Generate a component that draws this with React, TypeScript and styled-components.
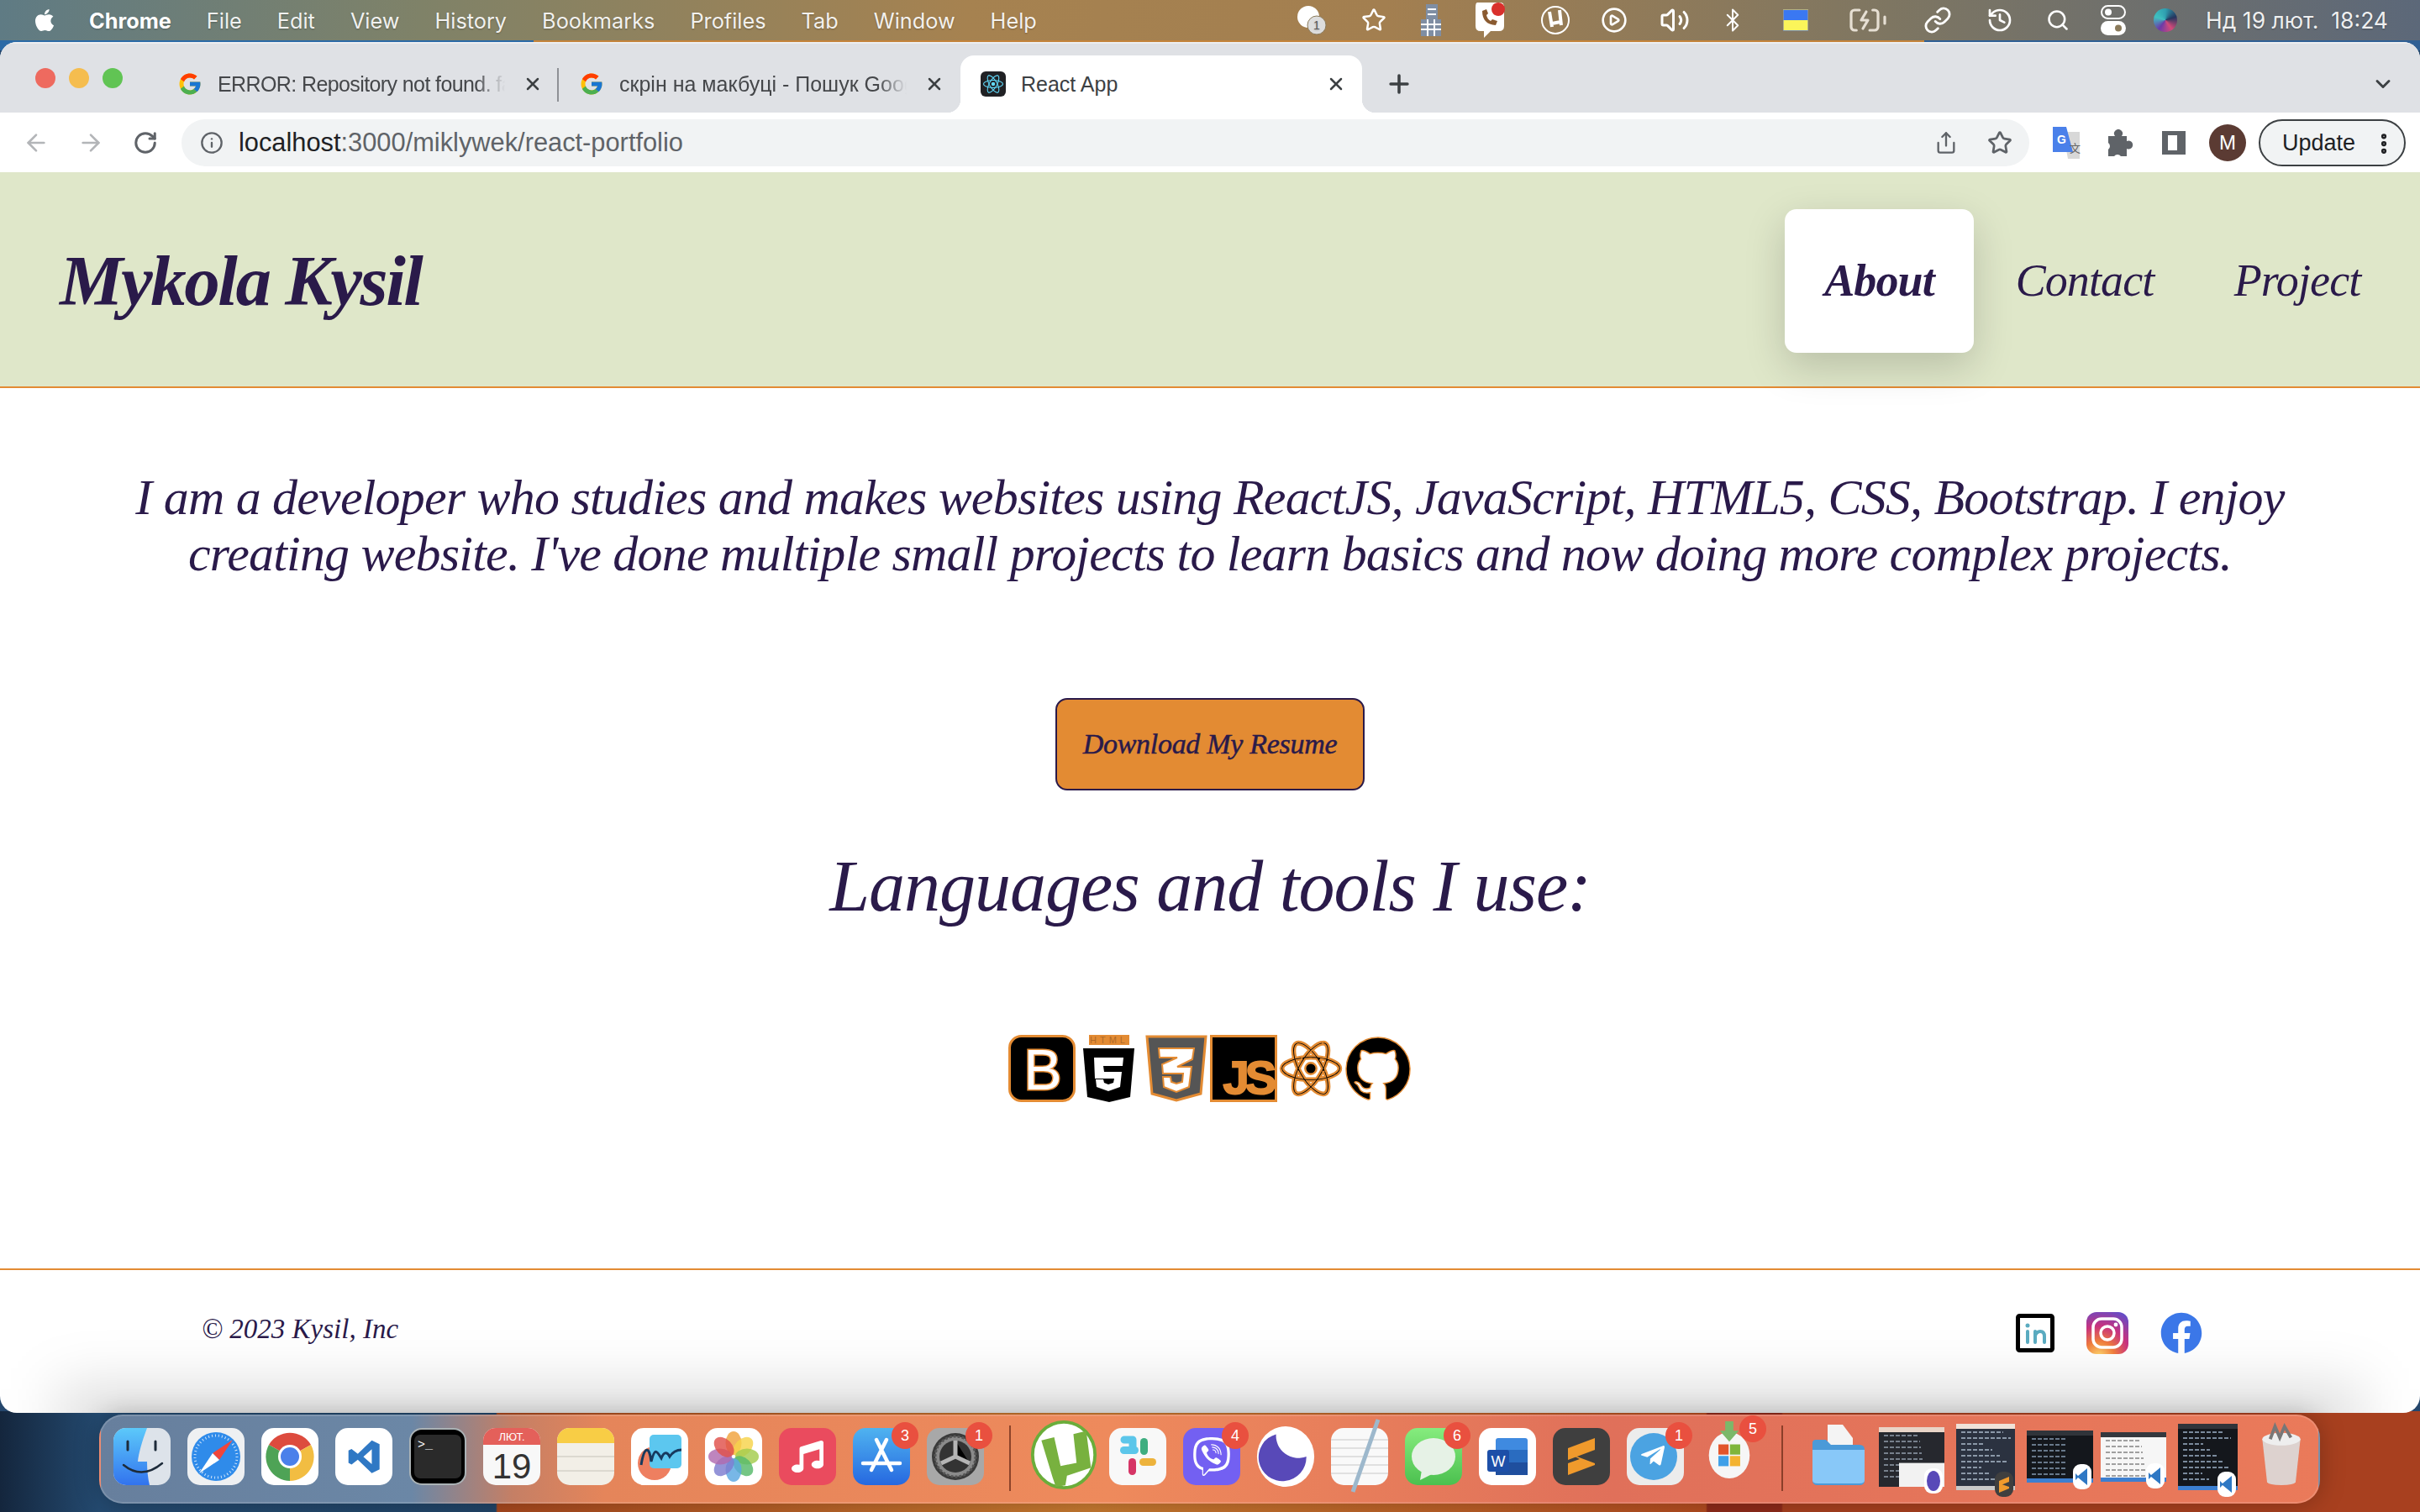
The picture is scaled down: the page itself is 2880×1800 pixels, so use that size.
import React from "react";
import styled, { createGlobalStyle } from "styled-components";
import { ArrowLeft, ArrowRight, RotateCw, Info, Share, Star, Plus, X, ChevronDown, Search, History, Link, Bluetooth, Volume2, CirclePlay, BatteryCharging, EllipsisVertical } from "lucide-react";
import { FaApple, FaFacebook, FaMusic, FaTelegramPlane, FaViber } from "react-icons/fa";
import { FcGoogle } from "react-icons/fc";
import { SiGithub, SiReact } from "react-icons/si";

const ink = "#2a1a4a";
const orange = "#e38b33";
const serif = '"Liberation Serif", "Times New Roman", serif';

const Global = createGlobalStyle`
  html, body { margin: 0; padding: 0; width: 2880px; height: 1800px; overflow: hidden; background: #24466c; }
  * { box-sizing: border-box; }
`;

const Desktop = styled.div`
  width: 2880px;
  height: 1800px;
  display: flex;
  flex-direction: column;
  background:
    linear-gradient(90deg, #2b6aa6 0 635px, #c4833a 635px 2290px, #2f5f94 2290px) top / 100% 60px no-repeat,
    linear-gradient(90deg, #14263d 0, #244a70 118px, #214467 590px, #a8481e 592px, #c77a30 1300px, #b34c20 2030px, #8e2a1a 2032px, #8e2a1a 2120px, #a8401f 2122px) bottom / 100% 120px no-repeat,
    #24466c;
  font-family: Inter, "Liberation Sans", sans-serif;
`;

const MenuBar = styled.header`
  height: 48px;
  flex: none;
  display: flex;
  align-items: center;
  padding: 0 38px 0 38px;
  color: #fff;
  background: linear-gradient(90deg, #5f7b84 0, #7f8268 500px, #a68250 1150px, #a37f50 1650px, #7e7662 2250px, #5c6879 2880px);
  text-shadow: 0 1px 2px rgba(0, 0, 0, .25);
`;

const LeftMenu = styled.nav`
  display: flex;
  align-items: center;
  gap: 42px;
`;

const AppleMark = styled.span`
  display: flex;
  margin-right: -4px;
  font-size: 30px;
`;

const MenuItem = styled.span<{ $strong?: boolean }>`
  font-weight: ${p => (p.$strong ? 700 : 400)};
  font-size: 25.3px;
  white-space: nowrap;
  color: rgba(255, 255, 255, ${p => (p.$strong ? 1 : .92)});
`;

const StatusArea = styled.div`
  margin-left: auto;
  display: flex;
  align-items: center;
`;

const StatusSlot = styled.span<{ $w: number }>`
  width: ${p => p.$w}px;
  display: flex;
  justify-content: center;
  align-items: center;
  color: #fff;
  svg { display: block; }
`;

const Clock = styled.span`
  margin-left: 15px;
  font-size: 26.5px;
  white-space: pre;
  color: rgba(255, 255, 255, .92);
`;

const Flag = styled.span`
  width: 30px;
  height: 26px;
  border: 1px solid rgba(150, 150, 150, .7);
  background: linear-gradient(#3a78f2 50%, #fbf55a 50%);
`;

const Siri = styled.span`
  width: 28px;
  height: 28px;
  border-radius: 50%;
  background: conic-gradient(#2f9fb0, #24365f, #d34a7a, #6b3aa8, #3fc0c0, #2f9fb0);
`;

const BrowserWindow = styled.div`
  margin-top: 2px;
  height: 1632px;
  flex: none;
  display: flex;
  flex-direction: column;
  overflow: hidden;
  background: #fff;
  border-radius: 20px;
`;

const TabStrip = styled.div`
  height: 84px;
  flex: none;
  display: flex;
  align-items: flex-end;
  background: #dfe1e5;
  position: relative;
  border-top: 2px solid #eceef0;
`;

const Lights = styled.div`
  width: 187px;
  height: 68px;
  padding: 15px 0 0 42px;
  display: flex;
  gap: 16px;
  align-self: flex-end;
  flex: none;
`;

const Light = styled.span<{ $c: string }>`
  width: 24px;
  height: 24px;
  border-radius: 50%;
  background: ${p => p.$c};
`;

const Tab = styled.div<{ $active?: boolean }>`
  width: 478px;
  height: 68px;
  flex: none;
  display: flex;
  align-items: center;
  gap: 18px;
  padding: 0 16px 0 24px;
  position: relative;
  color: ${p => (p.$active ? "#3c4043" : "#45474a")};
  background: ${p => (p.$active ? "#fff" : "transparent")};
  border-radius: ${p => (p.$active ? "16px 16px 0 0" : "0")};
  font: 25px "Liberation Sans", Arial, sans-serif;
  &::before, &::after {
    content: ${p => (p.$active ? '""' : "none")};
    position: absolute;
    bottom: 0;
    width: 16px;
    height: 16px;
  }
  &::before { left: -16px; background: radial-gradient(circle at 0 0, transparent 16px, #fff 16.5px); }
  &::after { right: -16px; background: radial-gradient(circle at 100% 0, transparent 16px, #fff 16.5px); }
`;

const TabDivider = styled.span`
  width: 2px;
  height: 40px;
  background: #8f9196;
  position: absolute;
  right: 0;
  top: 15px;
`;

const Favicon = styled.span`
  width: 30px;
  height: 30px;
  flex: none;
  display: flex;
  align-items: center;
  justify-content: center;
`;

const ReactFavicon = styled(Favicon)`
  background: #202124;
  border-radius: 6px;
  color: #61dafb;
`;

const TabTitle = styled.span<{ $fade?: number }>`
  flex: 1;
  min-width: 0;
  overflow: hidden;
  white-space: nowrap;
  ${p => p.$fade !== undefined && `letter-spacing: ${p.$fade}px; mask-image: linear-gradient(90deg, #000 90%, transparent 100%);`}
`;

const TabClose = styled.span`
  width: 30px;
  display: flex;
  justify-content: center;
  color: #3c4043;
`;

const NewTab = styled.span`
  margin-left: 27px;
  height: 68px;
  display: flex;
  align-items: center;
  color: #3c4043;
`;

const TabMenu = styled.span`
  margin-left: auto;
  margin-right: 30px;
  height: 68px;
  display: flex;
  align-items: center;
  color: #3c4043;
`;

const Toolbar = styled.div`
  height: 71px;
  flex: none;
  display: flex;
  align-items: center;
  padding: 0 0 0 10px;
  background: #fff;
`;

const NavButton = styled.span<{ $dim?: boolean }>`
  width: 65px;
  display: flex;
  justify-content: center;
  color: ${p => (p.$dim ? "#b3b5b8" : "#5f6368")};
`;

const Omnibox = styled.div`
  width: 2199px;
  height: 56px;
  margin-left: 11px;
  display: flex;
  align-items: center;
  padding: 0 3px 0 22px;
  background: #f1f3f4;
  border-radius: 28px;
  font: 30.8px "Liberation Sans", Arial, sans-serif;
  color: #5f6368;
`;

const Url = styled.span`
  margin-left: 18px;
  flex: 1;
  b { font-weight: 400; color: #202124; }
`;

const OmniAction = styled.span`
  width: 64px;
  display: flex;
  justify-content: center;
  color: #5f6368;
`;

const Extensions = styled.div`
  margin-left: 12px;
  display: flex;
  align-items: center;
`;

const Extension = styled.span`
  width: 64px;
  display: flex;
  justify-content: center;
  align-items: center;
  color: #5f6368;
`;

const PanelGlyph = styled.span`
  width: 28px;
  height: 28px;
  border: 5px solid #5f6368;
  border-left-width: 7px;
  border-right-width: 10px;
`;

const Avatar = styled.span`
  width: 44px;
  height: 44px;
  border-radius: 50%;
  background: #5b3b33;
  color: #fff;
  font: 24px "Liberation Sans", Arial, sans-serif;
  display: flex;
  align-items: center;
  justify-content: center;
`;

const UpdatePill = styled.span`
  margin-left: 5px;
  width: 175px;
  height: 56px;
  display: flex;
  align-items: center;
  justify-content: space-between;
  padding: 2px 9px 0 26px;
  border: 2px solid #3c4043;
  border-radius: 28px;
  background: #f1f3f4;
  color: #202124;
  font: 27px "Liberation Sans", Arial, sans-serif;
`;

const SiteHeader = styled.header`
  height: 257px;
  flex: none;
  display: flex;
  align-items: center;
  padding: 3px 0 0 71px;
  background: #dfe7c9;
  border-bottom: 2px solid ${orange};
  color: ${ink};
  font-family: ${serif};
  font-style: italic;
`;

const Brand = styled.h1`
  margin: 0;
  font-size: 85px;
  font-weight: 700;
  letter-spacing: -2.5px;
  white-space: nowrap;
`;

const SiteNav = styled.nav`
  margin-left: auto;
  margin-right: 25px;
  display: flex;
  align-items: center;
`;

const SiteLink = styled.a<{ $active?: boolean; $w: number }>`
  width: ${p => p.$w}px;
  height: 171px;
  display: flex;
  align-items: center;
  justify-content: center;
  font-size: 54px;
  letter-spacing: -.9px;
  font-weight: ${p => (p.$active ? 700 : 400)};
  background: ${p => (p.$active ? "#fff" : "transparent")};
  border-radius: 14px;
  box-shadow: ${p => (p.$active ? "0 16px 48px rgba(0, 0, 0, .175)" : "none")};
`;

const Main = styled.main`
  flex: 1;
  display: flex;
  flex-direction: column;
  align-items: center;
  padding-top: 97px;
  color: ${ink};
  font-family: ${serif};
  font-style: italic;
`;

const Tagline = styled.p`
  margin: 0;
  font-size: 60px;
  letter-spacing: -.8px;
  line-height: 67px;
  text-align: center;
  white-space: nowrap;
`;

const ResumeButton = styled.button`
  margin-top: 138px;
  width: 368px;
  height: 110px;
  background: ${orange};
  border: 2px solid ${ink};
  border-radius: 14px;
  color: ${ink};
  font: italic 400 34px ${serif};
  letter-spacing: -.3px;
  -webkit-text-stroke: .5px ${ink};
  padding: 0;
`;

const ToolsHeading = styled.h2`
  margin: 64px 0 0;
  font-size: 86px;
  letter-spacing: -1px;
  font-weight: 400;
  line-height: 100px;
`;

const TechRow = styled.div`
  margin-top: 127px;
  display: flex;
  font-style: normal;
`;

const TechIcon = styled.span<{ $stroke?: number }>`
  width: 80px;
  height: 80px;
  display: flex;
  align-items: center;
  justify-content: center;
  svg {
    display: block;
    overflow: visible;
    color: #000;
    ${p => p.$stroke && `stroke: ${orange}; stroke-width: ${p.$stroke}px;`}
  }
`;

const Footer = styled.footer`
  height: 172px;
  flex: none;
  display: flex;
  justify-content: space-between;
  align-items: flex-start;
  padding: 50px 259px 0 240px;
  border-top: 2px solid ${orange};
  color: ${ink};
  position: relative;
  &::after {
    content: "";
    position: absolute;
    left: 70px;
    right: 70px;
    bottom: -40px;
    height: 70px;
    background: rgba(0, 0, 0, .15);
    filter: blur(34px);
  }
`;

const Copyright = styled.span`
  font: italic 400 33px/40px ${serif};
`;

const Socials = styled.div`
  display: flex;
  align-items: center;
  gap: 38px;
  position: relative;
  z-index: 1;
`;

const Dock = styled.nav`
  margin: 2px 0 0 118px;
  width: 2643px;
  height: 106px;
  flex: none;
  display: flex;
  align-items: flex-start;
  gap: 20px;
  padding: 14px 0 0 15px;
  border-radius: 28px;
  border: 2px solid rgba(255, 255, 255, .14);
  background: linear-gradient(90deg, #677f9d 0, #6b87a6 370px, #c57f65 490px, #e5855a 600px, #ee8a5c 1200px, #e0705a 1800px, #ea7a5a 2640px);
  box-shadow: 0 0 30px rgba(0, 0, 0, .25);
`;

const DockSlot = styled.span<{ $size?: number; $top?: number }>`
  width: ${p => p.$size ?? 68}px;
  height: ${p => p.$size ?? 68}px;
  flex: none;
  position: relative;
  margin: ${p => p.$top ?? 0}px ${p => (68 - (p.$size ?? 68)) / 2}px 0;
  & > svg { display: block; width: 100%; height: 100%; overflow: visible; }
`;

const ThumbSlot = styled.span`
  width: 68px;
  height: 68px;
  flex: none;
  display: flex;
  align-items: center;
  justify-content: center;
  svg { flex: none; display: block; overflow: visible; }
`;

const Badge = styled.span`
  position: absolute;
  top: -7px;
  right: -10px;
  width: 32px;
  height: 32px;
  border-radius: 50%;
  background: #e9503f;
  color: #fff;
  font: 18px "Liberation Sans", Arial, sans-serif;
  display: flex;
  align-items: center;
  justify-content: center;
`;

const DockDivider = styled.span<{ $l: number; $r: number }>`
  width: 2px;
  height: 78px;
  margin: -3px ${p => p.$r}px 0 ${p => p.$l}px;
  flex: none;
  background: rgba(110, 45, 25, .75);
`;

const R = ({ fill, r = 15 }: { fill: string; r?: number }) => <rect width="68" height="68" rx={r} fill={fill} />;

const Finder = () => (
  <svg viewBox="0 0 68 68">
    <defs><linearGradient id="fb" x1="0" y1="0" x2="0" y2="1"><stop offset="0" stopColor="#5cc9fa" /><stop offset="1" stopColor="#3273ee" /></linearGradient></defs>
    <R fill="#dde3ea" />
    <path d="M15 0H40C34 16 30 30 29 40H40C40 50 41 60 43 68H15A15 15 0 0 1 0 53V15A15 15 0 0 1 15 0Z" fill="url(#fb)" />
    <path d="M17 16V26M50 16V26" stroke="#1d2b3a" strokeWidth="3" strokeLinecap="round" />
    <path d="M12 44Q34 62 58 42" stroke="#1d2b3a" strokeWidth="2.5" fill="none" strokeLinecap="round" />
  </svg>
);
const Safari = () => (
  <svg viewBox="0 0 68 68">
    <R fill="#eef0f2" />
    <circle cx="34" cy="34" r="29" fill="#2f8bea" />
    <circle cx="34" cy="34" r="25" fill="none" stroke="#cfe4fa" strokeWidth="3" strokeDasharray="1 3" />
    <path d="M54 14L38 38L30 30Z" fill="#f0453a" />
    <path d="M14 54L30 30L38 38Z" fill="#fff" />
  </svg>
);
const Chrome = () => (
  <svg viewBox="0 0 68 68">
    <R fill="#fff" />
    <path d="M34 34L9 20A29 29 0 0 1 59 20Z" fill="#dd4b3e" />
    <path d="M34 34L59 20A29 29 0 0 1 34 63Z" fill="#f2bd42" />
    <path d="M34 34L34 63A29 29 0 0 1 9 20Z" fill="#4ea356" />
    <circle cx="34" cy="34" r="14" fill="#fff" />
    <circle cx="34" cy="34" r="11" fill="#4a80ea" />
  </svg>
);
const VsCode = () => (
  <svg viewBox="0 0 68 68">
    <R fill="#fff" />
    <g transform="translate(12 12) scale(1.85)">
      <path d="M17 1.5l5 2.4v16.2l-5 2.4-9-8.6-4 3.1-2-1V8l2-1 4 3.1zM17 7.2L11.6 12l5.4 4.8z" fill="#2f78c4" />
    </g>
  </svg>
);
const Terminal = () => (
  <svg viewBox="0 0 68 68">
    <R fill="#aab2b5" />
    <rect x="2" y="2" width="64" height="64" rx="13" fill="#000" />
    <rect x="6" y="8" width="56" height="52" rx="7" fill="#2a2a2a" />
    <text x="10" y="24" fill="#fff" fontFamily="Liberation Mono" fontSize="15">{">_"}</text>
  </svg>
);
const Calendar = () => (
  <svg viewBox="0 0 68 68">
    <R fill="#f8f8f8" />
    <path d="M15 0H53A15 15 0 0 1 68 15V20H0V15A15 15 0 0 1 15 0Z" fill="#e4605a" />
    <text x="34" y="15" textAnchor="middle" fill="#fff" fontFamily="Liberation Sans" fontSize="13">ЛЮТ.</text>
    <text x="34" y="60" textAnchor="middle" fill="#333" fontFamily="Liberation Sans" fontSize="42">19</text>
  </svg>
);
const Notes = () => (
  <svg viewBox="0 0 68 68">
    <R fill="#f2efe7" />
    <path d="M15 0H53A15 15 0 0 1 68 15V18H0V15A15 15 0 0 1 15 0Z" fill="#f8cd45" />
    <path d="M0 34H68M0 51H68" stroke="#dcd9d0" strokeWidth="2" />
  </svg>
);
const Freeform = () => (
  <svg viewBox="0 0 68 68">
    <R fill="#fff" />
    <circle cx="28" cy="42" r="20" fill="#ee7f60" />
    <rect x="22" y="8" width="38" height="40" rx="5" fill="#5cc7ef" />
    <path d="M12 44C16 20 22 22 24 40C28 24 30 26 36 36C40 26 44 30 46 34C50 28 54 26 60 26" fill="none" stroke="#173a5e" strokeWidth="3" />
  </svg>
);
const Photos = () => (
  <svg viewBox="0 0 68 68">
    <R fill="#fff" />
    {["#f0a23c", "#f6d34a", "#a3cc4d", "#57b96a", "#5aa7e2", "#7c7cd0", "#b06ab0", "#e0504a"].map((c, i) => (
      <ellipse key={c} cx="34" cy="18" rx="9.5" ry="14" fill={c} opacity=".82" transform={`rotate(${i * 45} 34 34)`} />
    ))}
  </svg>
);
const Music = () => (
  <svg viewBox="0 0 68 68">
    <R fill="#ea4b5e" />
    <g transform="translate(15 15)"><FaMusic size={38} color="#fff" /></g>
  </svg>
);
const AppStore = () => (
  <svg viewBox="0 0 68 68">
    <defs><linearGradient id="as" x1="0" y1="0" x2="0" y2="1"><stop offset="0" stopColor="#4fb3f0" /><stop offset="1" stopColor="#2668e0" /></linearGradient></defs>
    <R fill="url(#as)" />
    <path d="M28 14L46 50M40 14L22 50M12 42H56" stroke="#fff" strokeWidth="4.5" strokeLinecap="round" />
  </svg>
);
const Settings = () => (
  <svg viewBox="0 0 68 68">
    <R fill="#a8a8a8" />
    <circle cx="34" cy="34" r="28" fill="#3a3a3a" />
    <circle cx="34" cy="34" r="24" fill="#8a8a8a" stroke="#555" strokeWidth="3" strokeDasharray="3 2" />
    <circle cx="34" cy="34" r="19" fill="#333" />
    <path d="M34 15V34L51 42M34 34L17 42" stroke="#b5b5b5" strokeWidth="5" />
  </svg>
);
const UTorrent = () => (
  <svg viewBox="0 0 80 84">
    <ellipse cx="40" cy="42" rx="39" ry="41" fill="#fff" stroke="#6aad3a" strokeWidth="4" />
    <path d="M12 24L28 20L36 56L56 52L52 16L68 12L74 58L44 68L42 80L30 82L26 70Z" fill="#78b13f" />
  </svg>
);
const Slack = () => (
  <svg viewBox="0 0 68 68">
    <R fill="#f8f8f8" />
    <path d="M28 14H18M28 14V22" stroke="#5cc6ea" strokeWidth="9" strokeLinecap="round" />
    <rect x="13" y="22" width="22" height="9" rx="4.5" fill="#5cc6ea" />
    <rect x="37" y="12" width="9" height="20" rx="4.5" fill="#3fae80" />
    <rect x="36" y="36" width="20" height="9" rx="4.5" fill="#edb33c" />
    <rect x="23" y="36" width="9" height="20" rx="4.5" fill="#d63566" />
  </svg>
);
const Viber = () => (
  <svg viewBox="0 0 68 68">
    <R fill="#7360f2" />
    <g transform="translate(11 11)"><FaViber size={46} color="#fff" /></g>
  </svg>
);
const Moon = () => (
  <svg viewBox="0 0 72 76">
    <ellipse cx="36" cy="38" rx="36" ry="38" fill="#fff" />
    <path d="M24 10A30 30 0 1 0 62 38 28 28 0 0 1 24 10Z" fill="#5849b8" />
  </svg>
);
const TextEdit = () => (
  <svg viewBox="0 0 68 68">
    <R fill="#f9f9f9" />
    <path d="M0 14H68M0 24H68M0 34H68M0 44H68M0 54H68" stroke="#d8d8d8" strokeWidth="1.5" />
    <path d="M56 -10L26 76" stroke="#9db8cc" strokeWidth="5" />
  </svg>
);
const Messages = () => (
  <svg viewBox="0 0 68 68">
    <defs><linearGradient id="ms" x1="0" y1="0" x2="0" y2="1"><stop offset="0" stopColor="#86ec7e" /><stop offset="1" stopColor="#4bc04f" /></linearGradient></defs>
    <R fill="url(#ms)" />
    <ellipse cx="34" cy="34" rx="26" ry="22" fill="#e6f2e6" />
    <path d="M20 50L18 62L34 54Z" fill="#e6f2e6" />
  </svg>
);
const Word = () => (
  <svg viewBox="0 0 68 68">
    <R fill="#fff" />
    <rect x="20" y="12" width="38" height="44" rx="3" fill="#3f8ae0" />
    <rect x="20" y="26" width="38" height="15" fill="#2a6cc0" />
    <rect x="20" y="41" width="38" height="15" fill="#1f4f9e" />
    <rect x="10" y="26" width="26" height="26" rx="3" fill="#1d4fa8" />
    <text x="23" y="46" textAnchor="middle" fill="#fff" fontFamily="Liberation Sans" fontSize="18">W</text>
  </svg>
);
const Sublime = () => (
  <svg viewBox="0 0 68 68">
    <R fill="#3f3f3f" />
    <path d="M50 12V26L18 38V24ZM18 30L50 42V44L18 56V42L32 37Z" fill="#f09a2c" />
  </svg>
);
const Telegram = () => (
  <svg viewBox="0 0 68 68">
    <R fill="#ececec" />
    <circle cx="32" cy="34" r="28" fill="#4ba3e2" />
    <g transform="translate(15 17)"><FaTelegramPlane size={32} color="#fff" /></g>
  </svg>
);
const MsStore = () => (
  <svg viewBox="0 0 68 84">
    <ellipse cx="34" cy="50" rx="30" ry="34" fill="#f6f6f6" />
    <rect x="18" y="34" width="15" height="15" fill="#e2552b" />
    <rect x="35" y="34" width="15" height="15" fill="#7fb53a" />
    <rect x="18" y="51" width="15" height="15" fill="#3fa0e8" />
    <rect x="35" y="51" width="15" height="15" fill="#f3b330" />
    <path d="M28 0H40V14H48L34 30L20 14H28Z" fill="#7bb86a" />
  </svg>
);
const Folder = () => (
  <svg viewBox="0 0 68 68">
    <path d="M22 -4H40L52 12V26H22Z" fill="#f4f4f4" />
    <path d="M4 18Q4 14 8 14H20L26 20H60Q66 20 66 26V62Q66 68 60 68H10Q4 68 4 62Z" fill="#4b9ad8" />
    <path d="M4 26H66V62Q66 66 60 66H10Q4 66 4 62Z" fill="#88c8f8" />
  </svg>
);

type ThumbSpec = { w: number; h: number; bg: string; top: string; line: string; foot?: string; paper?: boolean; app: string };

const Thumb = ({ w, h, bg, top, line, foot, paper, app }: ThumbSpec) => {
  const rows: number[] = [];
  for (let y = 10; y < h - 6; y += 7) rows.push(y);
  const bx = w - 24;
  const by = h - 22;
  return (
    <svg width={w} height={h} viewBox={`0 0 ${w} ${h}`}>
      <rect width={w} height={h} fill={bg} />
      <rect width={w} height="6" fill={top} />
      {rows.map(y => (
        <path key={y} d={`M6 ${y}H${26 + (y * 7) % (w - 30)}`} stroke={line} strokeWidth="1.8" strokeDasharray="5 2" />
      ))}
      {paper && <rect x="24" y={h * .6} width={w - 24} height={h * .4} fill="#f2f2f2" />}
      {foot && <rect y={h - 5} width={w} height="5" fill={foot} />}
      <rect x={bx} y={by} width="22" height="30" rx="9" fill={app === "sub" ? "#3f3f3f" : "#fff"} />
      {app === "moon" && <ellipse cx={bx + 11} cy={by + 15} rx="8" ry="12" fill="#5849b8" />}
      {app === "vs" && <path d={`M${bx + 17} ${by + 5}V${by + 25}L${bx + 6} ${by + 16}L${bx + 3} ${by + 19}V${by + 11}L${bx + 6} ${by + 14}Z`} fill="#2f78c4" />}
      {app === "sub" && <path d={`M${bx + 17} ${by + 6}V${by + 12}L${bx + 5} ${by + 17}V${by + 11}ZM${bx + 5} ${by + 14}L${bx + 17} ${by + 18}V${by + 20}L${bx + 5} ${by + 25}V${by + 20}Z`} fill="#f09a2c" />}
    </svg>
  );
};

const thumbs: ThumbSpec[] = [
  { w: 78, h: 71, bg: "#26282e", top: "#e9d5c8", line: "#77808c", paper: true, app: "moon" },
  { w: 70, h: 79, bg: "#2b3240", top: "#f0e2d8", line: "#8b98a8", foot: "#c9c9c9", app: "sub" },
  { w: 79, h: 62, bg: "#14171c", top: "#30343a", line: "#68788a", foot: "#3c7fd0", app: "vs" },
  { w: 78, h: 59, bg: "#f6f6f6", top: "#34383e", line: "#a0a0a0", foot: "#3c7fd0", app: "vs" },
  { w: 71, h: 79, bg: "#14171c", top: "#30343a", line: "#7a8a9c", foot: "#3c7fd0", app: "vs" },
];

const Trash = () => (
  <svg viewBox="0 0 68 72">
    <path d="M10 14H58L52 68Q50 72 34 72Q18 72 16 68Z" fill="#dcdcdc" opacity=".9" />
    <ellipse cx="34" cy="14" rx="24" ry="8" fill="#eee" />
    <path d="M20 14L26 -2L32 12L38 -2L46 12" stroke="#777" strokeWidth="4" fill="none" />
  </svg>
);

const BootstrapLogo = () => (
  <svg width="80" height="80" viewBox="0 0 80 80">
    <rect x="1.5" y="1.5" width="77" height="77" rx="14" fill="#000" stroke={orange} strokeWidth="3" />
    <text x="41" y="65" textAnchor="middle" fill="#fff" stroke={orange} strokeWidth="3" paintOrder="stroke" fontFamily="Liberation Sans" fontSize="68">B</text>
  </svg>
);
const Css3Logo = () => (
  <svg width="74" height="80" viewBox="0 0 74 80">
    <polygon points="2,2 72,2 66,70 37,78 8,70" fill="#555" stroke={orange} strokeWidth="3" />
    <polygon points="16,16 58,16 56,29 38,38 55,38 52,62 37,68 22,62 21,50 30,50 31,56 37,58 44,56 45,46 21,46 20,35 38,27 17,27" fill="#fff" stroke={orange} strokeWidth="2" />
  </svg>
);
const Html5Logo = () => (
  <svg width="80" height="80" viewBox="0 0 80 80">
    <rect x="16" y="0" width="48" height="12" fill={orange} />
    <text x="40" y="10" textAnchor="middle" fill="#b06a28" fontFamily="Liberation Sans" fontSize="11" letterSpacing="4">HTML</text>
    <polygon points="9,16 70,16 65,74 40,80 14,74" fill="#000" />
    <polygon points="22,27 57,27 56,37 33,37 34,44 55,44 53,62 39,67 25,62 24,53 33,53 34,57 39,59 45,57 46,52 23,52" fill="#fff" />
  </svg>
);
const JsLogo = () => (
  <svg width="80" height="80" viewBox="0 0 80 80">
    <rect x="1.5" y="1.5" width="77" height="77" fill="#000" stroke={orange} strokeWidth="3" />
    <text x="74" y="70" textAnchor="end" fill={orange} stroke={orange} strokeWidth="2" fontFamily="Liberation Sans" fontWeight="700" fontSize="56" letterSpacing="-5">JS</text>
  </svg>
);
const LinkedIn = () => (
  <svg width="46" height="46" viewBox="0 0 46 46">
    <rect x="2.5" y="2.5" width="41" height="41" rx="2" fill="#fff" stroke="#000" strokeWidth="5" />
    <circle cx="14" cy="14" r="2.5" fill="#5aabc0" />
    <path d="M14 21V34M23 34V21M23 26Q25 21 29 21Q34 21 34 27V34" stroke="#5aabc0" strokeWidth="4" fill="none" strokeLinecap="round" />
  </svg>
);
const Instagram = () => (
  <svg width="50" height="50" viewBox="0 0 50 50">
    <defs>
      <radialGradient id="ig" cx=".3" cy="1.05" r="1.2">
        <stop offset="0" stopColor="#fbd46c" /><stop offset=".3" stopColor="#ee7b3c" /><stop offset=".6" stopColor="#c8327e" /><stop offset="1" stopColor="#5a4fcf" />
      </radialGradient>
    </defs>
    <rect width="50" height="50" rx="12" fill="url(#ig)" />
    <rect x="8" y="8" width="34" height="34" rx="10" fill="none" stroke="#fff" strokeWidth="3.5" />
    <circle cx="25" cy="25" r="8" fill="none" stroke="#fff" strokeWidth="3.5" />
    <circle cx="35" cy="15" r="2.4" fill="#fff" />
  </svg>
);
const PuzzleGlyph = () => (
  <svg width="32" height="34" viewBox="0 0 32 34" fill="#5f6368">
    <path d="M2 9H10A5 5 0 1 1 18 9H24V15A5 5 0 1 1 24 24V33H17A5 5 0 0 0 9 33H2V25A5 5 0 0 0 2 17Z" />
  </svg>
);

const Bubble = () => (
  <svg width="36" height="36" viewBox="0 0 36 36">
    <circle cx="14" cy="14" r="13" fill="#fff" />
    <circle cx="24" cy="24" r="11" fill="#ddd" stroke="#8a7a5a" />
    <text x="24" y="29" textAnchor="middle" fontSize="14" fill="#555" fontFamily="Liberation Sans">1</text>
  </svg>
);
const Tower = () => (
  <svg width="24" height="38" viewBox="0 0 24 38">
    <rect x="6" width="14" height="20" fill="#7f8ea3" />
    <rect y="18" width="24" height="20" fill="#7f8ea3" />
    <path d="M0 24H24M0 30H24M8 18V38M16 18V38M8 6H18M8 12H18" stroke="#fff" strokeWidth="2" />
  </svg>
);
const ViberTray = () => (
  <svg width="40" height="42" viewBox="0 0 40 42">
    <path d="M4 0H32Q36 0 36 6V28Q36 34 30 34H20L12 42V34H8Q2 34 2 28V6Q2 0 4 0Z" fill="#fff" />
    <path d="M10 10Q10 26 26 27L28 22L22 20L20 22Q16 20 15 15L17 13L15 8Z" fill="#8a5a30" />
    <circle cx="29" cy="8" r="8" fill="#d9302c" />
  </svg>
);
const UTray = () => (
  <svg width="34" height="36" viewBox="0 0 34 36">
    <circle cx="17" cy="18" r="16" fill="none" stroke="#fff" strokeWidth="2" />
    <path d="M10 8L13 26M13 22L23 20M22 6L24 24" stroke="#fff" strokeWidth="4" fill="none" />
  </svg>
);
const Toggles = () => (
  <svg width="30" height="36" viewBox="0 0 30 36">
    <rect x="1" y="1" width="28" height="15" rx="7.5" fill="none" stroke="#fff" strokeWidth="2" />
    <circle cx="9" cy="8.5" r="4" fill="#fff" />
    <rect x="0" y="19" width="30" height="17" rx="8.5" fill="#fff" />
    <circle cx="21" cy="27.5" r="4" fill="#8a7a5a" />
  </svg>
);

const status: [number, React.ReactNode][] = [
  [74, <Bubble key="a" />],
  [74, <Star key="b" size={30} strokeWidth={2} />],
  [62, <Tower key="c" />],
  [80, <ViberTray key="d" />],
  [74, <UTray key="e" />],
  [66, <CirclePlay key="f" size={32} strokeWidth={2} />],
  [78, <Volume2 key="g" size={36} strokeWidth={2} />],
  [60, <Bluetooth key="h" size={30} strokeWidth={1.6} />],
  [90, <Flag key="i" />],
  [82, <BatteryCharging key="j" size={48} strokeWidth={1.6} color="#e6dfd3" />],
  [84, <Link key="k" size={34} strokeWidth={2} />],
  [64, <History key="l" size={32} strokeWidth={2} />],
  [74, <Search key="m" size={28} strokeWidth={2.2} />],
  [58, <Toggles key="n" />],
  [66, <Siri key="o" />],
];

export default function App() {
  return (
    <Desktop>
      <Global />
      <MenuBar>
        <LeftMenu>
          <AppleMark><FaApple /></AppleMark>
          <MenuItem $strong>Chrome</MenuItem>
          {["File", "Edit", "View", "History", "Bookmarks", "Profiles", "Tab", "Window", "Help"].map(m => (
            <MenuItem key={m}>{m}</MenuItem>
          ))}
        </LeftMenu>
        <StatusArea>
          {status.map(([w, node], i) => <StatusSlot key={i} $w={w}>{node}</StatusSlot>)}
          <Clock>Нд 19 лют.  18:24</Clock>
        </StatusArea>
      </MenuBar>

      <BrowserWindow>
        <TabStrip>
          <Lights>
            <Light $c="#ee6a5f" /><Light $c="#f5bd4f" /><Light $c="#61c454" />
          </Lights>
          <Tab>
            <Favicon><FcGoogle size={30} /></Favicon>
            <TabTitle $fade={-.6}>ERROR: Repository not found. fatal</TabTitle>
            <TabClose><X size={24} strokeWidth={2.5} /></TabClose>
            <TabDivider />
          </Tab>
          <Tab>
            <Favicon><FcGoogle size={30} /></Favicon>
            <TabTitle $fade={0}>скрін на макбуці - Пошук Google</TabTitle>
            <TabClose><X size={24} strokeWidth={2.5} /></TabClose>
          </Tab>
          <Tab $active>
            <ReactFavicon><SiReact size={24} /></ReactFavicon>
            <TabTitle>React App</TabTitle>
            <TabClose><X size={24} strokeWidth={2.5} /></TabClose>
          </Tab>
          <NewTab><Plus size={34} strokeWidth={2.5} /></NewTab>
          <TabMenu><ChevronDown size={28} strokeWidth={2.5} /></TabMenu>
        </TabStrip>

        <Toolbar>
          <NavButton $dim><ArrowLeft size={32} strokeWidth={2} /></NavButton>
          <NavButton $dim><ArrowRight size={32} strokeWidth={2} /></NavButton>
          <NavButton><RotateCw size={30} strokeWidth={2.4} /></NavButton>
          <Omnibox>
            <Info size={28} strokeWidth={2} />
            <Url><b>localhost</b>:3000/miklywek/react-portfolio</Url>
            <OmniAction><Share size={28} strokeWidth={2} /></OmniAction>
            <OmniAction><Star size={30} strokeWidth={2.2} /></OmniAction>
          </Omnibox>
          <Extensions>
            <Extension>
              <svg width="36" height="38" viewBox="0 0 36 38">
                <path d="M14 6H34V38H20Z" fill="#d8d8d8" />
                <path d="M2 0H18L26 30H2Z" fill="#4a80ea" />
                <text x="7" y="20" fontSize="14" fill="#fff" fontFamily="Liberation Sans" fontWeight="700">G</text>
                <text x="22" y="30" fontSize="13" fill="#666" fontFamily="Noto Sans CJK SC">文</text>
              </svg>
            </Extension>
            <Extension><PuzzleGlyph /></Extension>
            <Extension><PanelGlyph /></Extension>
            <Extension><Avatar>M</Avatar></Extension>
          </Extensions>
          <UpdatePill>Update <EllipsisVertical size={30} strokeWidth={3} /></UpdatePill>
        </Toolbar>

        <SiteHeader>
          <Brand>Mykola Kysil</Brand>
          <SiteNav>
            <SiteLink $active $w={225}>About</SiteLink>
            <SiteLink $w={264}>Contact</SiteLink>
            <SiteLink $w={242}>Project</SiteLink>
          </SiteNav>
        </SiteHeader>

        <Main>
          <Tagline>
            I am a developer who studies and makes websites using ReactJS, JavaScript, HTML5, CSS, Bootstrap. I enjoy<br />
            creating website. I've done multiple small projects to learn basics and now doing more complex projects.
          </Tagline>
          <ResumeButton>Download My Resume</ResumeButton>
          <ToolsHeading>Languages and tools I use:</ToolsHeading>
          <TechRow>
            <TechIcon><BootstrapLogo /></TechIcon>
            <TechIcon><Html5Logo /></TechIcon>
            <TechIcon><Css3Logo /></TechIcon>
            <TechIcon><JsLogo /></TechIcon>
            <TechIcon $stroke={.8}><SiReact size={72} /></TechIcon>
            <TechIcon $stroke={.45}><SiGithub size={76} /></TechIcon>
          </TechRow>
        </Main>

        <Footer>
          <Copyright>© 2023 Kysil, Inc</Copyright>
          <Socials>
            <LinkedIn />
            <Instagram />
            <FaFacebook size={50} color="#3b77e8" />
          </Socials>
        </Footer>
      </BrowserWindow>

      <Dock>
        <DockSlot><Finder /></DockSlot>
        <DockSlot><Safari /></DockSlot>
        <DockSlot><Chrome /></DockSlot>
        <DockSlot><VsCode /></DockSlot>
        <DockSlot><Terminal /></DockSlot>
        <DockSlot><Calendar /></DockSlot>
        <DockSlot><Notes /></DockSlot>
        <DockSlot><Freeform /></DockSlot>
        <DockSlot><Photos /></DockSlot>
        <DockSlot><Music /></DockSlot>
        <DockSlot><AppStore /><Badge>3</Badge></DockSlot>
        <DockSlot><Settings /><Badge>1</Badge></DockSlot>
        <DockDivider $l={10} $r={9} />
        <DockSlot $size={80} $top={-8}><UTorrent /></DockSlot>
        <DockSlot><Slack /></DockSlot>
        <DockSlot><Viber /><Badge>4</Badge></DockSlot>
        <DockSlot $size={72} $top={-2}><Moon /></DockSlot>
        <DockSlot><TextEdit /></DockSlot>
        <DockSlot><Messages /><Badge>6</Badge></DockSlot>
        <DockSlot><Word /></DockSlot>
        <DockSlot><Sublime /></DockSlot>
        <DockSlot><Telegram /><Badge>1</Badge></DockSlot>
        <DockSlot $top={-8}><MsStore /><Badge>5</Badge></DockSlot>
        <DockDivider $l={8} $r={11} />
        <DockSlot><Folder /></DockSlot>
        {thumbs.map((t, i) => (
          <ThumbSlot key={i}><Thumb {...t} /></ThumbSlot>
        ))}
        <DockSlot><Trash /></DockSlot>
      </Dock>
    </Desktop>
  );
}
